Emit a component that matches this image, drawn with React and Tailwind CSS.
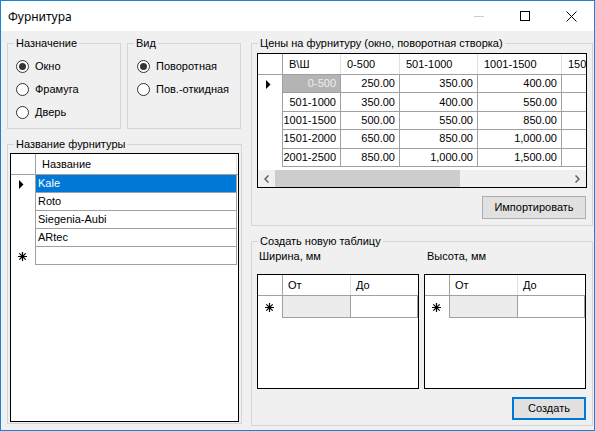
import React from 'react';

// --- Small drawings used inside the grids ---
const CurrentArrow = () => (
  <svg width="5" height="9" viewBox="0 0 5 9">
    <path d="M0 0 L4.5 4.5 L0 9 Z" fill="#000" />
  </svg>
);

const NewRowStar = () => (
  <svg width="9" height="9" viewBox="0 0 9 9" stroke="#000" strokeWidth="1.2" fill="none">
    <path d="M4.5 0 V9 M0 4.5 H9 M1.3 1.3 L7.7 7.7 M7.7 1.3 L1.3 7.7" />
  </svg>
);

const Chevron = ({ dir }) => (
  <svg width="5" height="8" viewBox="0 0 5 8" fill="none" stroke="#606060" strokeWidth="1.5">
    {dir === 'left' ? <path d="M4.5 0.5 L1 4 L4.5 7.5" /> : <path d="M0.5 0.5 L4 4 L0.5 7.5" />}
  </svg>
);

const GroupBox = ({ title, className = '', children }) => (
  <fieldset className={`border border-[#d5d5d5] ${className}`}>
    <legend className="ml-[6px] px-[2px] text-[11px] leading-[13px]">{title}</legend>
    {children}
  </fieldset>
);

const Radio = ({ label, checked }) => (
  <div className="flex items-center h-[23px]">
    <span className="w-[13px] h-[13px] rounded-full border border-[#333333] bg-white flex items-center justify-center">
      {checked && <span className="w-[7px] h-[7px] rounded-full bg-[#333333]" />}
    </span>
    <span className="ml-[6px]">{label}</span>
  </div>
);

// row header cell of a DataGridView
const RowHead = ({ marker }) => (
  <div className="w-[25px] shrink-0 border-r border-[#a0a0a0] flex items-center">
    {marker === 'current' && <span className="pl-[8px] flex"><CurrentArrow /></span>}
    {marker === 'new' && <span className="pl-[7px] flex"><NewRowStar /></span>}
  </div>
);

// --- Prices grid ---
const priceCols = [
  { name: 'В\\Ш', w: 'w-[58px]' },
  { name: '0-500', w: 'w-[59px]' },
  { name: '501-1000', w: 'w-[78px]' },
  { name: '1001-1500', w: 'w-[84px]' },
  { name: '1501-2000', w: 'w-[85px]' },
];

// last column is scrolled out of view, its values never show
const priceRows = [
  ['0-500', '250.00', '350.00', '400.00', ''],
  ['501-1000', '350.00', '400.00', '550.00', ''],
  ['1001-1500', '500.00', '550.00', '850.00', ''],
  ['1501-2000', '650.00', '850.00', '1,000.00', ''],
  ['2001-2500', '850.00', '1,000.00', '1,500.00', ''],
];

const PriceGrid = () => (
  <div className="ml-[5px] mt-[3px] w-[330px] h-[135px] border border-black bg-white flex flex-col overflow-hidden">
    <div className="flex h-[21px] shrink-0 border-b border-[#a0a0a0]">
      <div className="w-[25px] shrink-0 border-r border-[#a0a0a0]" />
      {priceCols.map((c) => (
        <div key={c.name} className={`${c.w} shrink-0 border-r border-[#e0e0e0] pl-[6px] flex items-center`}>
          {c.name}
        </div>
      ))}
    </div>
    {priceRows.map((row, idx) => (
      <div key={row[0]} className="flex h-[18.4px] shrink-0">
        <RowHead marker={idx === 0 ? 'current' : null} />
        {row.map((val, i) => (
          <div
            key={i}
            className={`${priceCols[i].w} shrink-0 border-r border-b border-[#a0a0a0] pr-[4px] flex items-center justify-end ${
              idx === 0 && i === 0 ? 'bg-[#b4b4b4] text-[#eeeeee]' : ''
            }`}
          >
            {val}
          </div>
        ))}
      </div>
    ))}
    <div className="flex-1" />
    {/* horizontal scrollbar */}
    <div className="h-[17px] shrink-0 flex bg-[#f0f0f0]">
      <div className="w-[17px] flex items-center justify-center"><Chevron dir="left" /></div>
      <div className="flex-1 flex items-center">
        <div className="w-[185px] h-[17px] bg-[#cdcdcd]" />
      </div>
      <div className="w-[17px] flex items-center justify-center"><Chevron dir="right" /></div>
    </div>
  </div>
);

// --- Hardware names grid ---
const names = ['Kale', 'Roto', 'Siegenia-Aubi', 'ARtec'];

const NamesGrid = () => (
  <div className="ml-[2px] mt-[2px] w-[229px] h-[269px] border border-black bg-white">
    <div className="flex h-[21px] border-b border-[#a0a0a0]">
      <div className="w-[25px] shrink-0 border-r border-[#a0a0a0]" />
      <div className="w-[201px] shrink-0 border-r border-[#e0e0e0] pl-[6px] flex items-center">Название</div>
    </div>
    {names.map((n, idx) => (
      <div key={n} className="flex h-[18px]">
        <RowHead marker={idx === 0 ? 'current' : null} />
        <div
          className={`w-[201px] shrink-0 border-r border-b border-[#a0a0a0] pl-[2px] flex items-center ${
            idx === 0 ? 'bg-[#0078d7] text-white' : ''
          }`}
        >
          {n}
        </div>
      </div>
    ))}
    <div className="flex h-[18px]">
      <RowHead marker="new" />
      <div className="w-[201px] shrink-0 border-r border-b border-[#a0a0a0]" />
    </div>
  </div>
);

// --- Empty range grids (От / До) ---
const RangeGrid = () => (
  <div className="w-[162px] h-[115px] border border-black bg-white">
    <div className="flex h-[21px] border-b border-[#a0a0a0]">
      <div className="w-[25px] shrink-0 border-r border-[#a0a0a0]" />
      <div className="w-[68px] shrink-0 border-r border-[#e0e0e0] pl-[5px] flex items-center">От</div>
      <div className="w-[67px] shrink-0 pl-[5px] flex items-center">До</div>
    </div>
    <div className="flex h-[22px]">
      <RowHead marker="new" />
      <div className="w-[68px] shrink-0 border-r border-b border-[#a0a0a0] bg-[#ececec]" />
      <div className="w-[67px] shrink-0 border-r border-b border-[#a0a0a0]" />
    </div>
  </div>
);

const App = () => {
  return (
    <div className="w-[595px] h-[431px] border border-[#1883d7] bg-[#f0f0f0] flex flex-col font-['Liberation_Sans',Arial,sans-serif] text-[11px] leading-[13px] text-black">
      {/* Title bar */}
      <div className="h-[30px] shrink-0 bg-white flex items-center">
        <span className="pl-[7px] font-['Noto_Sans',sans-serif] text-[12px] flex-1">Фурнитура</span>
        <div className="w-[46px] h-full flex items-center justify-center">
          <div className="w-[10px] h-[1px] bg-[#cccccc]" />
        </div>
        <div className="w-[46px] h-full flex items-center justify-center">
          <div className="w-[10px] h-[10px] border border-black" />
        </div>
        <div className="w-[46px] h-full flex items-center justify-center">
          <svg width="11" height="11" viewBox="0 0 11 11" stroke="#000" strokeWidth="1">
            <path d="M0.5 0.5 L10.5 10.5 M10.5 0.5 L0.5 10.5" />
          </svg>
        </div>
      </div>

      {/* Form body */}
      <div className="flex-1 flex pt-[6px] pl-[6px]">
        {/* Left column */}
        <div className="w-[235px] flex flex-col">
          <div className="flex gap-[6px]">
            <GroupBox title="Назначение" className="w-[114px] h-[92px]">
              <div className="pt-[5px] pl-[8px]">
                <Radio label="Окно" checked />
                <Radio label="Фрамуга" />
                <Radio label="Дверь" />
              </div>
            </GroupBox>
            <GroupBox title="Вид" className="w-[114px] h-[92px]">
              <div className="pt-[5px] pl-[9px]">
                <Radio label="Поворотная" checked />
                <Radio label="Пов.-откидная" />
              </div>
            </GroupBox>
          </div>
          <GroupBox title="Название фурнитуры" className="mt-[9px] w-[235px] h-[286px]">
            <NamesGrid />
          </GroupBox>
        </div>

        {/* Right column */}
        <div className="ml-[9px] w-[342px] flex flex-col">
          <GroupBox title="Цены на фурнитуру (окно, поворотная створка)" className="w-[342px] h-[189px]">
            <PriceGrid />
            <div className="w-[335px] flex justify-end mt-[8px]">
              <button className="w-[104px] h-[23px] bg-[#e1e1e1] border border-[#adadad] mr-[1px]">
                Импортировать
              </button>
            </div>
          </GroupBox>

          <GroupBox title="Создать новую таблицу" className="mt-[9px] w-[342px] h-[191px]">
            <div className="ml-[5px] mt-[2px] flex gap-[5px]">
              <div className="w-[162px] pl-[2px]">Ширина, мм</div>
              <div className="w-[162px] pl-[3px]">Высота, мм</div>
            </div>
            <div className="ml-[5px] mt-[11px] flex gap-[5px]">
              <RangeGrid />
              <RangeGrid />
            </div>
            <div className="w-[335px] flex justify-end mt-[8px]">
              <button className="w-[74px] h-[23px] bg-[#e1e1e1] border-2 border-[#0078d7] mr-[1px]">
                Создать
              </button>
            </div>
          </GroupBox>
        </div>
      </div>
    </div>
  );
};

export default App;
